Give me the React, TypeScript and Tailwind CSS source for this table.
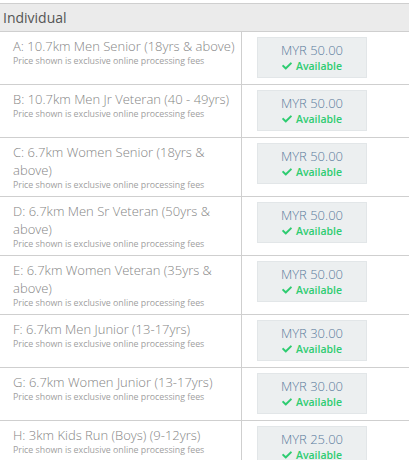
import { FaCheck } from "react-icons/fa";

type Ticket = {
  code: string;
  name: string;
  price: string;
};

const tickets: Ticket[] = [
  { code: "A", name: "10.7km Men Senior (18yrs & above)", price: "50.00" },
  { code: "B", name: "10.7km Men Jr Veteran (40 - 49yrs)", price: "50.00" },
  { code: "C", name: "6.7km Women Senior (18yrs & above)", price: "50.00" },
  { code: "D", name: "6.7km Men Sr Veteran (50yrs & above)", price: "50.00" },
  { code: "E", name: "6.7km Women Veteran (35yrs & above)", price: "50.00" },
  { code: "F", name: "6.7km Men Junior (13-17yrs)", price: "30.00" },
  { code: "G", name: "6.7km Women Junior (13-17yrs)", price: "30.00" },
  { code: "H", name: "3km Kids Run (Boys) (9-12yrs)", price: "25.00" },
];

function TicketRow({ ticket }: { ticket: Ticket }) {
  return (
    <div className="flex border-b border-[#cfcfcf]">
      <div className="w-[242px] shrink-0 border-r border-[#cfcfcf] pl-[13px] pr-1 pt-[5px] pb-[5px]">
        <p className="text-[13px] font-light leading-[18px] text-[#858585]">
          {ticket.code}: {ticket.name}
        </p>
        <p className="text-[8.8px] leading-[12px] text-[#a0a0a0]">
          Price shown is exclusive online processing fees
        </p>
      </div>
      <div className="flex-1 pl-[15px] pt-[5px] pb-[6px]">
        <div className="flex h-[41px] w-[110px] flex-col items-center justify-center border border-[#e2e6e8] bg-[#eceff0]">
          <p className="text-[13px] font-light leading-[17px] text-[#5a7b9c]">MYR {ticket.price}</p>
          <p className="flex items-center gap-[4px] text-[10.5px] font-semibold leading-[14px] text-[#2ecc71]">
            <FaCheck className="h-[10px] w-[10px]" />
            Available
          </p>
        </div>
      </div>
    </div>
  );
}

export default function App() {
  return (
    <div className="min-h-[460px] bg-white pt-[3px] font-['Open_Sans',sans-serif]">
      <div className="border-y border-[#cfcfcf] bg-[#ebebeb] px-[3px] py-[3px]">
        <p className="text-[14px] leading-[21px] text-[#555555]">Individual</p>
      </div>
      {tickets.map((t) => (
        <TicketRow key={t.code} ticket={t} />
      ))}
    </div>
  );
}
